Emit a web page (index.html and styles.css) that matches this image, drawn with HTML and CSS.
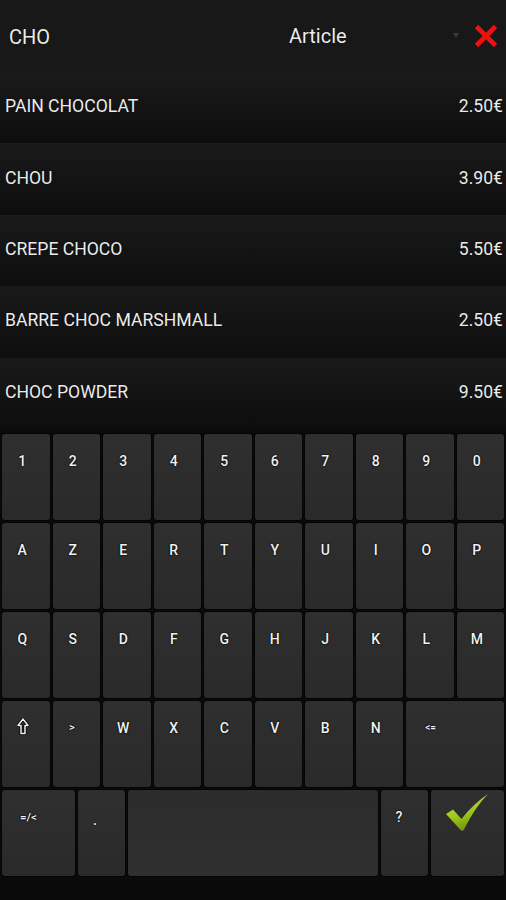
FILE: index.html
```html
<!DOCTYPE html>
<html>
<head>
<meta charset="utf-8">
<link rel="stylesheet" href="styles.css">
</head>
<body>
<div class="app">
  <header class="header">
    <div class="search">CHO</div>
    <div class="select">
      <span class="select-label">Article</span>
      <span class="select-arrow"></span>
    </div>
    <svg class="close" width="24" height="24" viewBox="0 0 24 24">
      <path d="M2.5 2.5 L21.5 21.5 M21.5 2.5 L2.5 21.5" stroke="#ee1111" stroke-width="4.6" stroke-linecap="butt" fill="none"/>
    </svg>
  </header>
  <div class="list">
    <div class="row"><span class="name">PAIN CHOCOLAT</span><span class="price">2.50€</span></div>
    <div class="row"><span class="name">CHOU</span><span class="price">3.90€</span></div>
    <div class="row"><span class="name">CREPE CHOCO</span><span class="price">5.50€</span></div>
    <div class="row"><span class="name">BARRE CHOC MARSHMALL</span><span class="price">2.50€</span></div>
    <div class="row"><span class="name">CHOC POWDER</span><span class="price">9.50€</span></div>
  </div>
  <div class="keyboard">
    <div class="key">1</div><div class="key">2</div><div class="key">3</div><div class="key">4</div><div class="key">5</div>
    <div class="key">6</div><div class="key">7</div><div class="key">8</div><div class="key">9</div><div class="key">0</div>

    <div class="key">A</div><div class="key">Z</div><div class="key">E</div><div class="key">R</div><div class="key">T</div>
    <div class="key">Y</div><div class="key">U</div><div class="key">I</div><div class="key">O</div><div class="key">P</div>

    <div class="key">Q</div><div class="key">S</div><div class="key">D</div><div class="key">F</div><div class="key">G</div>
    <div class="key">H</div><div class="key">J</div><div class="key">K</div><div class="key">L</div><div class="key">M</div>

    <div class="key key-shift">
      <svg class="shift" width="12" height="17" viewBox="0 0 12 17">
        <path d="M6 1 L11 7.5 L8 7.5 L8 15.5 L4 15.5 L4 7.5 L1 7.5 Z" fill="none" stroke="#000" stroke-width="3" stroke-linejoin="round"/>
        <path d="M6 1 L11 7.5 L8 7.5 L8 15.5 L4 15.5 L4 7.5 L1 7.5 Z" fill="none" stroke="#eeeeee" stroke-width="1.5" stroke-linejoin="round"/>
      </svg>
    </div>
    <div class="key key-small">&gt;</div><div class="key">W</div><div class="key">X</div><div class="key">C</div>
    <div class="key">V</div><div class="key">B</div><div class="key">N</div><div class="key key-back">&lt;=</div>

    <div class="key key-sym">=/&lt;</div><div class="key key-dot">.</div><div class="key key-space"></div><div class="key key-q">?</div>
    <div class="key key-ok">
      <svg class="check" width="44" height="40" viewBox="0 0 44 40">
        <defs>
          <linearGradient id="g" x1="0" y1="0" x2="0.4" y2="1">
            <stop offset="0" stop-color="#c2e03a"/>
            <stop offset="0.6" stop-color="#9fc81e"/>
            <stop offset="1" stop-color="#6f9410"/>
          </linearGradient>
        </defs>
        <path d="M1 21 L8 16.5 L16.5 26 Q28 11 43 1 Q30 14 18.5 37.5 L16 37.5 Z" fill="url(#g)"/>
      </svg>
    </div>
  </div>
</div>
</body>
</html>
```
FILE: styles.css
```css
html, body {
  margin: 0;
  padding: 0;
  background: #000;
}
body {
  width: 506px;
  height: 900px;
  overflow: hidden;
  font-family: Roboto, "Liberation Sans", sans-serif;
  color: #ececec;
}
.app {
  display: flex;
  flex-direction: column;
  height: 900px;
}
.header {
  height: 72px;
  flex: none;
  background: #181818;
  display: flex;
  align-items: center;
  padding: 0 8px 0 9px;
  box-sizing: border-box;
}
.search {
  font-size: 20px;
  flex: 1;
  padding-top: 2px;
  text-shadow: 0 0 1px #000;
}
.select {
  display: flex;
  align-items: center;
  width: 185px;
}
.select-label {
  font-size: 20px;
  flex: 1;
  text-shadow: 0 0 1px #000;
}
.select-arrow {
  width: 0;
  height: 0;
  border-left: 3px solid transparent;
  border-right: 3px solid transparent;
  border-top: 5px solid #3a3a3a;
  margin-right: 15px;
  margin-top: -2px;
}
.close {
  display: block;
}
.list {
  flex: none;
  display: flex;
  flex-direction: column;
}
.row {
  height: 71.4px;
  display: flex;
  align-items: center;
  justify-content: space-between;
  padding: 0 3px 0 5px;
  background: linear-gradient(#1a1a1a, #0d0d0d);
  font-size: 17.6px;
  text-shadow: 0 0 1px #000;
}
.row .name, .row .price {
  margin-top: -3px;
}
.keyboard {
  flex: 1;
  background: #0a0a0a;
  display: grid;
  grid-template-columns: repeat(20, 1fr);
  grid-auto-rows: 86px;
  column-gap: 3px;
  row-gap: 3px;
  padding: 5px 2px 0 2px;
  align-content: start;
}
.key {
  grid-column: span 2;
  background: linear-gradient(#2f2f2f, #2a2a2a);
  border-radius: 3px;
  box-shadow: 0 0 0 1px #050505;
  display: flex;
  justify-content: center;
  align-items: flex-start;
  padding: 19px 7px 0 0;
  box-sizing: border-box;
  font-size: 14px;
  font-weight: 500;
  line-height: 16px;
  color: #f2f2f2;
  text-shadow: 0 0 2px #000, 0 0 1px #000;
}
.key-shift {
  padding-right: 5px;
  padding-top: 17px;
}
.shift {
  display: block;
}
.key-small {
  font-size: 11px;
  padding-right: 9px;
}
.key-back {
  grid-column: span 4;
  font-size: 10px;
  padding-right: 49px;
}
.key-sym {
  grid-column: span 3;
  font-size: 11.5px;
  padding-right: 20px;
}
.key-dot {
  padding-right: 13px;
  padding-top: 22px;
}
.key-space {
  grid-column: span 10;
  background: linear-gradient(#2c2c2c, #303030);
}
.key-q {
  padding-right: 11px;
}
.key-ok {
  grid-column: span 3;
  padding: 3px 0 0 14px;
  justify-content: flex-start;
}
.check {
  display: block;
}
```
